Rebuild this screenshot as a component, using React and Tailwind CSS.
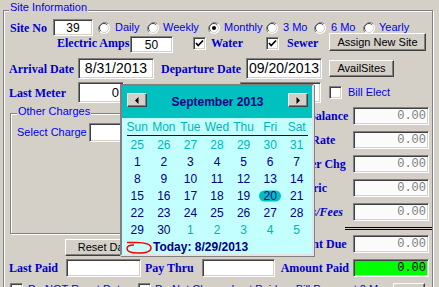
const bold = "font-['Liberation_Serif',serif] font-bold text-[12px] leading-none text-[#0000cc] whitespace-nowrap";
const reg = "text-[11px] leading-none text-[#0000ee] whitespace-nowrap";
const sunken = "border border-t-[#808080] border-l-[#808080] border-r-white border-b-white shadow-[inset_1px_1px_0_#404040,inset_-1px_-1px_0_#d4d0c8]";
const raised = "border border-t-white border-l-white border-r-[#404040] border-b-[#404040] shadow-[inset_-1px_-1px_0_#808080] bg-[#d4d0c8] flex items-center justify-center text-[11px] leading-none text-black whitespace-nowrap";
const etched = "border border-[#808080] shadow-[1px_1px_0_#fff,inset_1px_1px_0_#fff]";
const mono = "font-['Liberation_Mono',monospace] text-[12px] leading-none";

function Box({ className = '', children }) {
  return <div className={`${sunken} flex items-center overflow-hidden ${className}`}>{children}</div>;
}

function Radio({ checked }) {
  return (
    <svg width="12" height="12" viewBox="0 0 12 12" className="shrink-0">
      <circle cx="6" cy="6" r="6" fill="#fff" />
      <path d="M1.8 10.2A6 6 0 0 1 10.2 1.8" fill="none" stroke="#808080" />
      <path d="M2.8 9.2A4.5 4.5 0 0 1 9.2 2.8" fill="none" stroke="#404040" />
      <path d="M9.2 2.8A4.5 4.5 0 0 1 2.8 9.2" fill="none" stroke="#d4d0c8" />
      {checked && <circle cx="6" cy="6" r="2" fill="#000" />}
    </svg>
  );
}

function Check({ checked }) {
  return (
    <div className={`${sunken} bg-white w-[13px] h-[13px] shrink-0 flex items-center justify-center`}>
      {checked && (
        <svg width="9" height="9" viewBox="0 0 9 9">
          <path d="M1 4 L3.2 6.5 L8 1.5" fill="none" stroke="#000" strokeWidth="1.7" />
        </svg>
      )}
    </div>
  );
}

function RadioItem({ w, gap, label, checked }) {
  return (
    <div className={`flex items-center ${w}`}>
      <Radio checked={checked} />
      <span className={`${reg} ${gap}`}>{label}</span>
    </div>
  );
}

function Money({ label, pad, italic }) {
  return (
    <div className="flex items-center h-[18px]">
      <span className={`${bold} ${italic ? 'italic' : ''} w-[103px] ${pad}`}>{label}</span>
      <Box className="w-[76px] h-[18px] bg-[#fbfbfb] justify-end pr-[2px]">
        <span className={`${mono} text-[#808080]`}>0.00</span>
      </Box>
    </div>
  );
}

const weeks = [
  [[25, 1], [26, 1], [27, 1], [28, 1], [29, 1], [30, 1], [31, 1]],
  [[1], [2], [3], [4], [5], [6], [7]],
  [[8], [9], [10], [11], [12], [13], [14]],
  [[15], [16], [17], [18], [19], [20], [21]],
  [[22], [23], [24], [25], [26], [27], [28]],
  [[29], [30], [1, 1], [2, 1], [3, 1], [4, 1], [5, 1]],
];

function Calendar() {
  return (
    <div className="absolute left-[120px] top-[84px] w-[194px] h-[172px] border-2 border-t-[#808080] border-l-[#808080] border-r-[#e4e4e4] border-b-[#e4e4e4] shadow-[1px_1px_0_#808080] bg-[#c4ffff] font-['Liberation_Sans',Arial,sans-serif]">
      <div className="h-[32px] bg-[#00c0c0] flex items-start justify-between pl-[5px] pr-[4px] pt-[7px]">
        <div className={`${raised} w-[20px] h-[14px]`}>
          <svg width="4" height="7" viewBox="0 0 4 7"><polygon points="3.5,0 3.5,7 0,3.5" fill="#000" /></svg>
        </div>
        <span className="mt-[2px] text-[12px] leading-[14px] font-bold text-[#000080]">September 2013</span>
        <div className={`${raised} w-[20px] h-[14px]`}>
          <svg width="4" height="7" viewBox="0 0 4 7"><polygon points="0.5,0 0.5,7 4,3.5" fill="#000" /></svg>
        </div>
      </div>
      <div className="grid grid-cols-7 px-[2px] h-[17px] items-center text-[12px] leading-none text-[#00b4b4]">
        {['Sun', 'Mon', 'Tue', 'Wed', 'Thu', 'Fri', 'Sat'].map(d => (
          <span key={d} className="text-center">{d}</span>
        ))}
      </div>
      <div className="ml-[5px] mr-[4px] h-[1px] bg-[#000080]" />
      {weeks.map((wk, i) => (
        <div key={i} className="grid grid-cols-7 px-[2px] h-[17px] items-center text-[12px] leading-none">
          {wk.map(([d, other], j) => (
            <div key={j} className="relative flex justify-center">
              {d === 20 && !other && (
                <span className="absolute top-1/2 left-1/2 -translate-x-1/2 -translate-y-1/2 w-[22px] h-[11px] rounded-full bg-[#00c0c0]" />
              )}
              <span className={`relative ${other ? 'text-[#00b4b4]' : 'text-[#000080]'}`}>{d}</span>
            </div>
          ))}
        </div>
      ))}
      <div className="h-[16px] flex items-center pl-[4px]">
        <svg width="26" height="13" viewBox="0 0 26 13" className="mt-[3px]">
          <path d="M1 1.5 H10 C18 1.5 25 3 25 7 C25 10.5 19 12 12.5 12 C5.5 12 1 10.5 1 7.5 C1 5 4 4 8 4" fill="none" stroke="#ff0000" strokeWidth="1.5" />
        </svg>
        <span className="ml-[1px] mt-[1px] text-[12px] leading-none font-bold text-[#000080]">Today: 8/29/2013</span>
      </div>
    </div>
  );
}

export default function App() {
  return (
    <div className="relative w-[439px] h-[287px] overflow-hidden bg-[#d4d0c8] font-['Liberation_Sans',Arial,sans-serif]">
      <div className={`relative ml-[3px] mt-[10px] w-[430px] h-[320px] ${etched}`}>
        <span className={`absolute left-[5px] -top-[9px] px-[1px] bg-[#d4d0c8] ${reg} leading-[14px]`}>Site Information</span>

        {/* site no + billing period */}
        <div className="mt-[8px] h-[17px] flex items-center pl-[6px]">
          <span className={`${bold} w-[43px]`}>Site No</span>
          <Box className="w-[40px] h-[17px] bg-white justify-center text-[12px]">39</Box>
          <div className="ml-[5px] flex items-center">
            <RadioItem w="w-[49px]" gap="ml-[5px]" label="Daily" />
            <RadioItem w="w-[61px]" gap="ml-[4px]" label="Weekly" />
            <RadioItem w="w-[58px]" gap="ml-[4px]" label="Monthly" checked />
            <RadioItem w="w-[48px]" gap="ml-[5px]" label="3 Mo" />
            <RadioItem w="w-[49px]" gap="ml-[5px]" label="6 Mo" />
            <RadioItem w="w-[50px]" gap="ml-[4px]" label="Yearly" />
          </div>
        </div>

        {/* electric / water / sewer */}
        <div className="-mt-[3px] h-[20px] flex items-start pl-[53px]">
          <span className={`${bold} w-[73px] h-[20px] flex items-center`}>Electric Amps</span>
          <Box className="mt-[3px] w-[43px] h-[17px] bg-white justify-center text-[12px]">50</Box>
          <div className="ml-[20px] w-[73px] h-[20px] flex items-center">
            <Check checked />
            <span className={`${bold} ml-[5px]`}>Water</span>
          </div>
          <div className="w-[63px] h-[20px] flex items-center">
            <Check checked />
            <span className={`${bold} ml-[8px]`}>Sewer</span>
          </div>
          <div className={`${raised} w-[97px] h-[18px]`}>Assign New Site</div>
        </div>

        {/* dates */}
        <div className="mt-[5px] h-[21px] flex items-center pl-[5px]">
          <span className={`${bold} w-[69px]`}>Arrival Date</span>
          <Box className="w-[76px] h-[21px] bg-white justify-center text-[14px]">8/31/2013</Box>
          <span className={`${bold} ml-[7px] w-[85px]`}>Departure Date</span>
          <Box className="w-[76px] h-[21px] bg-white justify-center text-[14px]">09/20/2013</Box>
          <div className={`${raised} ml-[7px] w-[65px] h-[17px]`}>AvailSites</div>
        </div>

        {/* meter */}
        <div className="mt-[3px] h-[21px] flex items-center pl-[5px]">
          <span className={`${bold} w-[69px]`}>Last Meter</span>
          <Box className="w-[46px] h-[21px] bg-white justify-end pr-[4px] text-[13px]">0</Box>
          <Box className="ml-[116px] w-[81px] h-[21px] bg-white" />
          <div className="ml-[8px] flex items-center">
            <Check />
            <span className={`${reg} ml-[6px]`}>Bill Elect</span>
          </div>
        </div>

        {/* charges */}
        <div className="flex h-[155px]">
          <div className="w-[246px] pl-[6px]">
            <div className={`relative mt-[10px] w-[240px] h-[121px] ${etched}`}>
              <span className={`absolute left-[6px] -top-[8px] px-[1px] bg-[#d4d0c8] ${reg} leading-[14px]`}>Other Charges</span>
              <div className="mt-[9px] h-[19px] flex items-center pl-[6px]">
                <span className={`${reg} w-[72px]`}>Select Charge</span>
                <Box className="w-[140px] h-[19px] bg-white" />
              </div>
            </div>
            <div className={`${raised} ml-[55px] mt-[5px] w-[86px] h-[17px]`}>Reset Dates</div>
          </div>
          <div className="flex flex-col">
            <div className="mt-[4px] flex flex-col gap-[6px]">
              <Money label="Prev Balance" pad="pl-[31px]" />
              <Money label="Daily Rate" pad="pl-[31px]" />
              <Money label="Other Chg" pad="pl-[41px]" />
              <Money label="Electric" pad="pl-[37px]" />
              <Money label="Taxes/Fees" pad="pl-[38px]" italic />
            </div>
            <div className="mt-[6px] ml-[95px] w-[87px] h-[3px] border-t border-b border-black" />
            <div className="mt-[5px]">
              <Money label="Amount Due" pad="pl-[31px]" />
            </div>
          </div>
        </div>

        {/* payment */}
        <div className="h-[19px] flex items-center pl-[5px]">
          <span className={`${bold} w-[57px]`}>Last Paid</span>
          <Box className="w-[75px] h-[18px] bg-white" />
          <span className={`${bold} ml-[4px] w-[57px]`}>Pay Thru</span>
          <Box className="w-[73px] h-[18px] bg-white" />
          <span className={`${bold} w-[78px] pr-[4px] text-right`}>Amount Paid</span>
          <Box className="w-[76px] h-[18px] bg-[#00ff00] justify-end pr-[2px]">
            <span className={`${mono} text-black`}>0.00</span>
          </Box>
        </div>

        <div className="mt-[6px] h-[17px] flex items-start pl-[6px]">
          <div className="w-[128px] flex items-center">
            <Check />
            <span className={`${reg} ml-[5px]`}>Do NOT Reset Dates</span>
          </div>
          <div className="w-[255px] flex items-center">
            <Check />
            <span className={`${reg} ml-[4px]`}>Do Not Charge Last Paid on Bill Payment 2 Mo</span>
          </div>
          <div className={`${raised} w-[32px] h-[17px]`}>OK</div>
        </div>
      </div>
      <Calendar />
    </div>
  );
}
